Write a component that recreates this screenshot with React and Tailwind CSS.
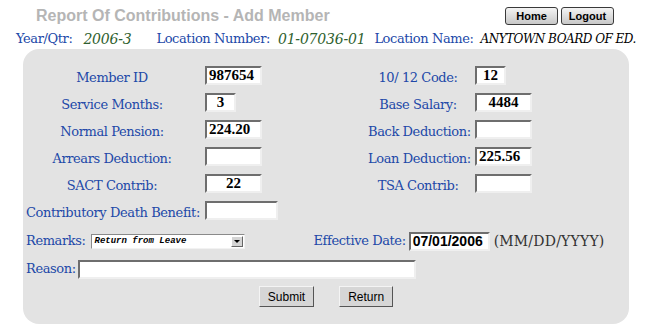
import React from 'react';

function Field({ value = '', width, align = 'left', className = '' }) {
  return (
    <div
      className={`h-[19px] bg-white border-2 border-t-[#6e6e6e] border-l-[#6e6e6e] border-b-[#efefef] border-r-[#efefef] flex items-center px-[2px] font-bold text-[15px] leading-none text-black font-['Liberation_Serif',serif] ${align === 'center' ? 'justify-center' : 'justify-start'} ${className}`}
      style={{ width }}
    >
      {value}
    </div>
  );
}

function Label({ children, className = '' }) {
  return (
    <span className={`text-[#2148a8] text-[13px] font-['DejaVu_Serif',serif] tracking-[-0.4px] whitespace-nowrap ${className}`}>
      {children}
    </span>
  );
}

const rows = [
  ['Member ID', { v: '987654', w: 57 }, '10/ 12 Code:', { v: '12', w: 31, c: true }],
  ['Service Months:', { v: '3', w: 31, c: true }, 'Base Salary:', { v: '4484', w: 57, c: true }],
  ['Normal Pension:', { v: '224.20', w: 57 }, 'Back Deduction:', { v: '', w: 57 }],
  ['Arrears Deduction:', { v: '', w: 57 }, 'Loan Deduction:', { v: '225.56', w: 57 }],
  ['SACT Contrib:', { v: '22', w: 57, c: true }, 'TSA Contrib:', { v: '', w: 57 }],
];

function SmallButton({ children }) {
  return (
    <button className="w-[53px] h-[18px] rounded-[3px] border border-[#3a3a3a] bg-gradient-to-b from-[#f4f4f4] to-[#c8c8c8] text-[11px] font-bold text-black leading-none font-['Liberation_Sans',sans-serif]">
      {children}
    </button>
  );
}

function FormButton({ children }) {
  return (
    <button className="h-[21px] px-[8px] bg-[#d6d6d6] border border-t-[#f4f4f4] border-l-[#f4f4f4] border-b-[#555] border-r-[#555] text-[12px] text-black leading-none font-['Liberation_Sans',sans-serif]">
      {children}
    </button>
  );
}

const italicValue = "italic text-[14px] font-['DejaVu_Serif',serif] tracking-[-0.2px]";

export default function App() {
  return (
    <div className="w-[650px] h-[328px] bg-white relative overflow-hidden">
      {/* Header */}
      <div className="flex items-start h-[29px]">
        <h1 className="pl-[36px] pt-[4px] text-[16px] font-bold text-[#b5b5b5] font-['Liberation_Sans',sans-serif]">
          Report Of Contributions - Add Member
        </h1>
        <div className="ml-auto mr-[36px] mt-[7px] flex gap-[3px]">
          <SmallButton>Home</SmallButton>
          <SmallButton>Logout</SmallButton>
        </div>
      </div>

      <div className="flex items-center h-[20px] pl-[16px] whitespace-nowrap">
        <Label>Year/Qtr:</Label>
        <span className={`ml-[11px] text-[#2f5f2f] ${italicValue}`}>2006-3</span>
        <Label className="ml-[25px]">Location Number:</Label>
        <span className={`ml-[8px] text-[#2f5f2f] ${italicValue}`}>01-07036-01</span>
        <Label className="ml-[9px]">Location Name:</Label>
        <span className="ml-[7px] text-black italic text-[12px] font-['DejaVu_Serif',serif] tracking-[-0.5px]">ANYTOWN BOARD OF ED.</span>
      </div>

      {/* Panel */}
      <div className="ml-[23px] w-[606px] h-[275px] bg-[#e3e3e3] rounded-[16px] pt-[13px]">
        {rows.map(([l1, f1, l2, f2]) => (
          <div key={l1} className="flex items-center h-[27px]">
            <div className="w-[175px] pl-[3px] text-center"><Label>{l1}</Label></div>
            <div className="ml-[7px] w-[163px]">
              <Field value={f1.v} width={f1.w} align={f1.c ? 'center' : 'left'} />
            </div>
            <div className="w-[100px] text-center"><Label>{l2}</Label></div>
            <div className="ml-[7px]">
              <Field value={f2.v} width={f2.w} align={f2.c ? 'center' : 'left'} />
            </div>
          </div>
        ))}

        <div className="flex items-center h-[27px] pl-[3px]">
          <div className="w-[179px]"><Label>Contributory Death Benefit:</Label></div>
          <Field width={73} />
        </div>

        <div className="flex items-center h-[30px] pl-[3px] mt-[2px]">
          <Label>Remarks:</Label>
          <div className="ml-[5px] w-[154px] h-[15px] bg-white border border-t-[#8a8a8a] border-l-[#8a8a8a] border-b-[#f2f2f2] border-r-[#f2f2f2] flex items-center">
            <span className="pl-[3px] flex-1 text-[9px] italic font-bold font-['Liberation_Mono',monospace] text-black leading-none">Return from Leave</span>
            <span className="w-[12px] h-[11px] mr-[1px] bg-[#d4d4d4] border border-t-[#fff] border-l-[#fff] border-b-[#666] border-r-[#666] flex items-center justify-center">
              <span className="block w-0 h-0 border-l-[3px] border-r-[3px] border-t-[3px] border-l-transparent border-r-transparent border-t-black" />
            </span>
          </div>
          <Label className="ml-[69px]">Effective Date:</Label>
          <div className="ml-[3px] w-[81px] h-[19px] bg-white border-2 border-t-[#6e6e6e] border-l-[#6e6e6e] border-b-[#efefef] border-r-[#efefef] flex items-center pl-[2px] text-[14px] font-bold leading-none font-['Liberation_Sans_Narrow','Liberation_Sans',sans-serif] text-black">
            07/01/2006
          </div>
          <span className="ml-[4px] text-[14px] text-[#333] font-['DejaVu_Serif',serif] tracking-[0.2px]">(MM/DD/YYYY)</span>
        </div>

        <div className="flex items-center h-[26px] pl-[3px]">
          <Label>Reason:</Label>
          <Field width={338} className="ml-[2px]" />
        </div>

        <div className="flex justify-center gap-[25px] mt-[4px]">
          <FormButton>Submit</FormButton>
          <FormButton>Return</FormButton>
        </div>
      </div>
    </div>
  );
}
